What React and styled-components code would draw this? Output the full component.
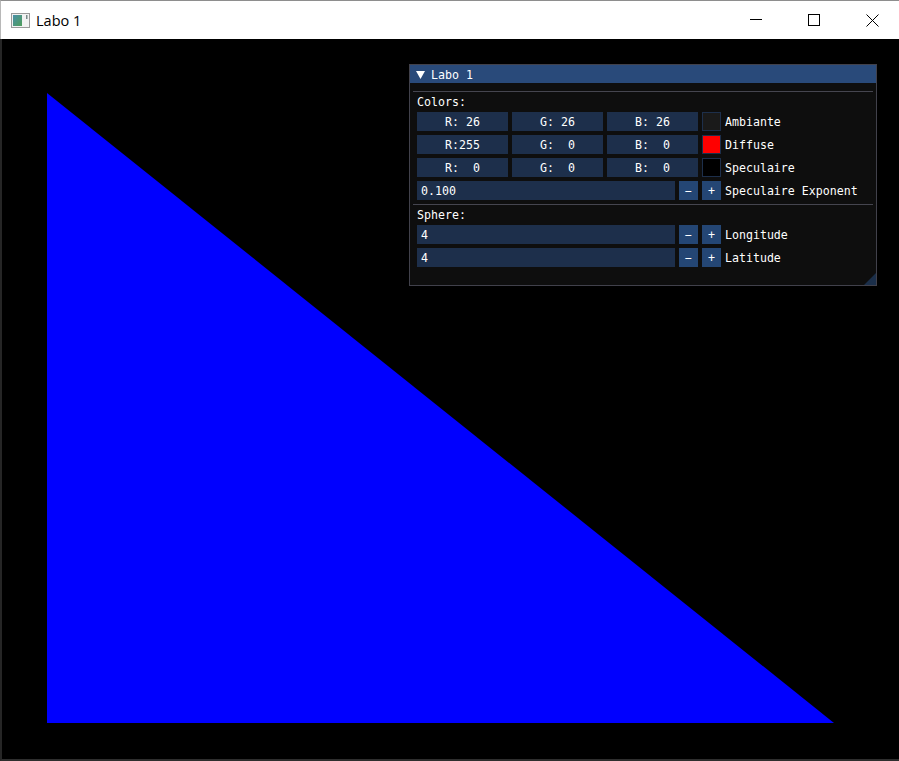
import React from "react";
import styled, { createGlobalStyle } from "styled-components";

const Global = createGlobalStyle`
  html, body { margin: 0; padding: 0; background: #000; }
  * { box-sizing: border-box; }
`;

const Frame = styled.div`
  width: 899px;
  height: 761px;
  display: flex;
  flex-direction: column;
  overflow: hidden;
  background: #000;
`;

const TitleBar = styled.div`
  height: 39px;
  flex: none;
  display: flex;
  align-items: center;
  background: #fff;
  border-top: 1px solid #8e8e8e;
  border-left: 1px solid #b8b8b8;
`;

const AppIcon = styled.svg`
  margin-left: 10px;
  flex: none;
`;

const TitleText = styled.span`
  margin-left: 6px;
  font-family: "Open Sans", "Noto Sans", sans-serif;
  font-size: 14.5px;
  color: #000;
  flex: 1;
`;

const Controls = styled.div`
  display: flex;
  margin-right: -2px;
  height: 100%;
`;

const ControlButton = styled.div`
  width: 58px;
  height: 100%;
  display: flex;
  align-items: center;
  justify-content: center;
`;

const Viewport = styled.div`
  flex: 1;
  position: relative;
  background: #000;
  border-left: 2px solid #262626;
  border-bottom: 2px solid #2e2e2e;
`;

const Canvas = styled.svg`
  position: absolute;
  left: 0;
  top: 0;
`;

const Panel = styled.div`
  position: absolute;
  left: 407px;
  top: 25px;
  width: 468px;
  height: 222px;
  border: 1px solid #41414b;
  background: #0e0e0e;
  font-family: "DejaVu Sans Mono", "Liberation Mono", monospace;
  font-size: 11.6px;
  color: #fff;
`;

const PanelTitle = styled.div`
  height: 18px;
  background: #294a7a;
  display: flex;
  align-items: center;
  padding: 2px 0 0 6px;
  line-height: 16px;
`;

const Arrow = styled.svg`
  margin-right: 6px;
  flex: none;
`;

const Body = styled.div`
  padding: 8px 7px 0 7px;
  display: flex;
  flex-direction: column;
`;

const Separator = styled.div`
  height: 1px;
  background: #45454f;
  margin: 0 -4px 3px -4px;
`;

const SectionLabel = styled.div`
  height: 13px;
  line-height: 15px;
  margin-bottom: 4px;
  white-space: pre;
`;

const Row = styled.div`
  display: flex;
  gap: 4px;
  height: 19px;
  margin-bottom: 4px;
  line-height: 21px;
`;

const DragBox = styled.div`
  width: 91px;
  height: 19px;
  background: #1d2f4b;
  text-align: center;
  white-space: pre;
`;

const Swatch = styled.div`
  width: 19px;
  height: 19px;
  border: 1px solid #1d2f4b;
  background: ${(p) => p.$color};
`;

const InputBox = styled.div`
  width: 258px;
  height: 19px;
  background: #1d2f4b;
  padding-left: 4px;
  white-space: pre;
`;

const StepButton = styled.div`
  width: 19px;
  height: 19px;
  background: #244674;
  text-align: center;
`;

const Label = styled.div`
  white-space: pre;
`;

const Grip = styled.div`
  position: absolute;
  right: 0;
  bottom: 0;
  width: 12px;
  height: 12px;
  background: #1b2f4a;
  clip-path: polygon(100% 0, 100% 100%, 0 100%);
`;

const colorRows = [
  { r: "R: 26", g: "G: 26", b: "B: 26", color: "#1a1a1a", label: "Ambiante" },
  { r: "R:255", g: "G:  0", b: "B:  0", color: "#ff0000", label: "Diffuse" },
  { r: "R:  0", g: "G:  0", b: "B:  0", color: "#000000", label: "Speculaire" },
];

function StepRow({ value, label }) {
  return (
    <Row>
      <InputBox>{value}</InputBox>
      <StepButton>−</StepButton>
      <StepButton>+</StepButton>
      <Label>{label}</Label>
    </Row>
  );
}

export default function App() {
  return (
    <>
      <Global />
      <Frame>
        <TitleBar>
          <AppIcon width="19" height="15" viewBox="0 0 19 15">
            <defs>
              <linearGradient id="ig" x1="0" y1="0" x2="1" y2="1">
                <stop offset="0" stopColor="#4a8fa8" />
                <stop offset="1" stopColor="#4f9e5a" />
              </linearGradient>
            </defs>
            <rect x="0.5" y="0.5" width="18" height="14" fill="#f2f2f2" stroke="#9a9a9a" />
            <rect x="2" y="2" width="9" height="11" fill="url(#ig)" />
            <rect x="15" y="2" width="1.5" height="4" fill="#7a8a8a" />
          </AppIcon>
          <TitleText>Labo 1</TitleText>
          <Controls>
            <ControlButton>
              <svg width="12" height="12" viewBox="0 0 12 12">
                <line x1="0" y1="5.5" x2="12" y2="5.5" stroke="#000" strokeWidth="1" />
              </svg>
            </ControlButton>
            <ControlButton>
              <svg width="12" height="12" viewBox="0 0 12 12">
                <rect x="0.5" y="0.5" width="11" height="11" fill="none" stroke="#000" strokeWidth="1" />
              </svg>
            </ControlButton>
            <ControlButton>
              <svg width="13" height="13" viewBox="0 0 13 13">
                <path d="M0.5 0.5 L12.5 12.5 M12.5 0.5 L0.5 12.5" stroke="#000" strokeWidth="1" />
              </svg>
            </ControlButton>
          </Controls>
        </TitleBar>
        <Viewport>
          <Canvas width="897" height="720" viewBox="0 0 897 720">
            <polygon points="45,54 45,684 832,684" fill="#0000ff" />
          </Canvas>
          <Panel>
            <PanelTitle>
              <Arrow width="9" height="8" viewBox="0 0 9 8">
                <polygon points="0,0 9,0 4.5,8" fill="#fff" />
              </Arrow>
              <span>Labo 1</span>
            </PanelTitle>
            <Body>
              <Separator />
              <SectionLabel>Colors:</SectionLabel>
              {colorRows.map((row) => (
                <Row key={row.label}>
                  <DragBox>{row.r}</DragBox>
                  <DragBox>{row.g}</DragBox>
                  <DragBox>{row.b}</DragBox>
                  <Swatch $color={row.color} />
                  <Label>{row.label}</Label>
                </Row>
              ))}
              <StepRow value="0.100" label="Speculaire Exponent" />
              <Separator />
              <SectionLabel>Sphere:</SectionLabel>
              <StepRow value="4" label="Longitude" />
              <StepRow value="4" label="Latitude" />
            </Body>
            <Grip />
          </Panel>
        </Viewport>
      </Frame>
    </>
  );
}
